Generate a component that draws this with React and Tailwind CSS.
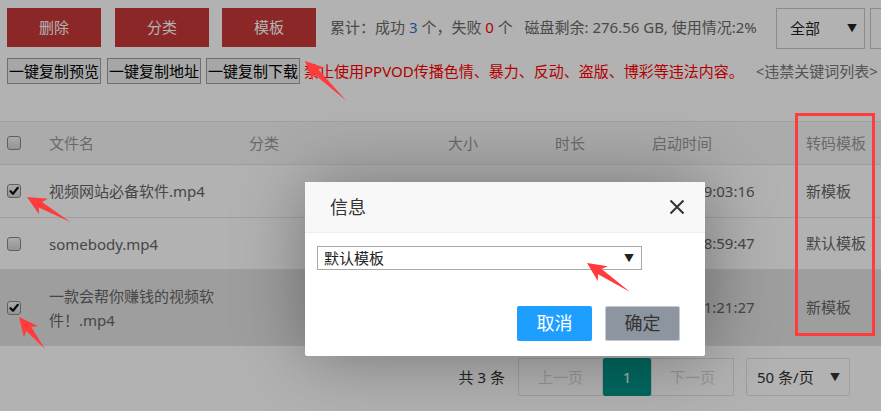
import React from "react";

const files = [
  { name: "视频网站必备软件.mp4", time: "11-08 09:03:16", tpl: "新模板", checked: true, h: "h-[53px]" },
  { name: "somebody.mp4", time: "11-08 08:59:47", tpl: "默认模板", checked: false, h: "h-[52px]" },
  { name: "一款会帮你赚钱的视频软件！.mp4", time: "11-07 21:21:27", tpl: "新模板", checked: true, h: "h-[76px]", hover: true },
];

function Check({ checked }) {
  return (
    <span className="flex h-[14px] w-[14px] items-center justify-center rounded-[3px] border border-[#8a8a8a] bg-gradient-to-b from-[#f6f6f6] to-[#d4d4d4]">
      {checked && (
        <svg width="10" height="10" viewBox="0 0 10 10">
          <path d="M1.5 5.2 L4 7.8 L8.8 1.8" fill="none" stroke="#111" strokeWidth="2.2" strokeLinecap="round" strokeLinejoin="round" />
        </svg>
      )}
    </span>
  );
}

function Arrow({ x, y, angle, len }) {
  return (
    <polygon
      points={`0,0 19,-9 15.5,-3.2 ${len},0 15.5,3.2 19,9`}
      transform={`translate(${x} ${y}) rotate(${angle})`}
      fill="#ff3b3b"
    />
  );
}

export default function App() {
  return (
    <div className="relative h-[411px] w-[881px] overflow-hidden bg-white text-[15px] [font-family:'Noto_Sans','Noto_Sans_CJK_SC',sans-serif]">
      {/* 顶部操作栏 */}
      <div className="flex items-start pl-[7px] pt-[8px]">
        <button className="h-[39px] w-[94px] bg-[#c73838] text-white">删除</button>
        <button className="ml-[14px] h-[39px] w-[94px] bg-[#c73838] text-white">分类</button>
        <button className="ml-[13px] h-[39px] w-[94px] bg-[#c73838] text-white">模板</button>
        <span className="ml-[14px] leading-[39px] whitespace-nowrap text-[#6a6a6a]">
          累计：成功 <span className="text-[#2f72c4]">3</span> 个，失败 <span className="text-[#f00]">0</span> 个&nbsp;&nbsp; 磁盘剩余: 276.56 GB, 使用情况:2%
        </span>
        <div className="ml-auto flex items-center">
          <div className="flex h-[41px] w-[89px] items-center justify-between border border-[#c8c8c8] pl-[13px] pr-[7px] text-[#222]">
            <span>全部</span>
            <span className="text-[10px]">▼</span>
          </div>
          <div className="ml-[5px] h-[41px] w-[11px] border border-r-0 border-[#c8c8c8]"></div>
        </div>
      </div>

      {/* 复制按钮 + 提示 */}
      <div className="mt-[9px] flex items-center pl-[7px] whitespace-nowrap">
        <button className="h-[26px] w-[94px] border border-[#a0a0a0] bg-[#efefef] text-black">一键复制预览</button>
        <button className="ml-[6px] h-[26px] w-[94px] border border-[#a0a0a0] bg-[#efefef] text-black">一键复制地址</button>
        <button className="ml-[5px] h-[26px] w-[94px] border border-[#a0a0a0] bg-[#efefef] text-black">一键复制下载</button>
        <span className="ml-[4px] text-[#f00]">禁止使用PPVOD传播色情、暴力、反动、盗版、博彩等违法内容。</span>
        <span className="ml-[12px] text-[#777]">&lt;违禁关键词列表&gt;</span>
      </div>

      {/* 表格 */}
      <div className="mt-[37px]">
        <div className="grid h-[44px] grid-cols-[42px_200px_199px_107px_97px_154px_1fr] items-center border-y border-[#e6e6e6] bg-[#f5f5f5] pl-[7px] text-[#999]">
          <Check />
          <span>文件名</span>
          <span>分类</span>
          <span>大小</span>
          <span>时长</span>
          <span>启动时间</span>
          <span>转码模板</span>
        </div>
        {files.map((f) => (
          <div
            key={f.name}
            className={`grid ${f.h} grid-cols-[42px_200px_199px_107px_97px_154px_1fr] items-center border-b border-[#e6e6e6] pl-[7px] text-[#666] ${f.hover ? "bg-[#e3e3e3]" : ""}`}
          >
            <Check checked={f.checked} />
            <span className="pr-[30px] leading-[24px]">{f.name}</span>
            <span></span>
            <span></span>
            <span></span>
            <span className="whitespace-nowrap">{f.time}</span>
            <span>{f.tpl}</span>
          </div>
        ))}
      </div>

      {/* 分页 */}
      <div className="mt-[12px] flex h-[38px] items-center justify-end pr-[31px] whitespace-nowrap">
        <span className="mr-[13px] text-[#333]">共&nbsp;3&nbsp;条</span>
        <span className="flex h-[38px] w-[85px] items-center justify-center border border-[#e2e2e2] text-[#d6d6d6]">上一页</span>
        <span className="flex h-[38px] w-[48px] items-center justify-center rounded-[2px] bg-[#009688] text-white">1</span>
        <span className="flex h-[38px] w-[83px] items-center justify-center border border-[#e2e2e2] text-[#d6d6d6]">下一页</span>
        <div className="ml-[12px] flex h-[38px] w-[104px] items-center justify-between rounded-[2px] border border-[#e2e2e2] pl-[10px] pr-[9px] text-[#333]">
          <span>50 条/页</span>
          <span className="text-[10px]">▼</span>
        </div>
      </div>

      {/* 遮罩 */}
      <div className="absolute inset-0 z-10 bg-black/30"></div>

      {/* 弹窗 */}
      <div className="absolute left-[305px] top-[182px] z-20 h-[174px] w-[400px] rounded-[2px] bg-white shadow-[1px_1px_70px_rgba(0,0,0,0.35)]">
        <div className="flex h-[51px] items-center justify-between border-b border-[#eee] bg-[#f8f8f8] pl-[25px] pr-[20px]">
          <span className="text-[18px] text-[#333]">信息</span>
          <svg width="16" height="16" viewBox="0 0 16 16">
            <path d="M1.5 1.5 L14.5 14.5 M14.5 1.5 L1.5 14.5" stroke="#333" strokeWidth="2" />
          </svg>
        </div>
        <div className="pl-[12px] pt-[13px]">
          <div className="flex h-[24px] w-[325px] items-center justify-between border border-[#a9a9a9] pl-[6px] pr-[7px] text-[#222]">
            <span>默认模板</span>
            <span className="text-[10px]">▼</span>
          </div>
        </div>
        <div className="mt-[36px] flex justify-end gap-[13px] pr-[25px]">
          <button className="h-[35px] w-[75px] rounded-[2px] bg-[#1e9fff] text-[18px] text-white">取消</button>
          <button className="h-[35px] w-[75px] rounded-[2px] border border-[#c5cad0] bg-[#8d96a0] text-[18px] text-[#333]">确定</button>
        </div>
      </div>

      {/* 标注 */}
      <div className="absolute left-[795px] top-[113px] z-30 h-[223px] w-[80px] border-[3px] border-[#ff3b3b]"></div>
      <svg className="pointer-events-none absolute inset-0 z-30" width="881" height="411">
        <Arrow x={305} y={61} angle={44} len={57} />
        <Arrow x={27} y={197} angle={30} len={50} />
        <Arrow x={19} y={317} angle={51} len={41} />
        <Arrow x={587} y={263} angle={34} len={52} />
      </svg>
    </div>
  );
}
